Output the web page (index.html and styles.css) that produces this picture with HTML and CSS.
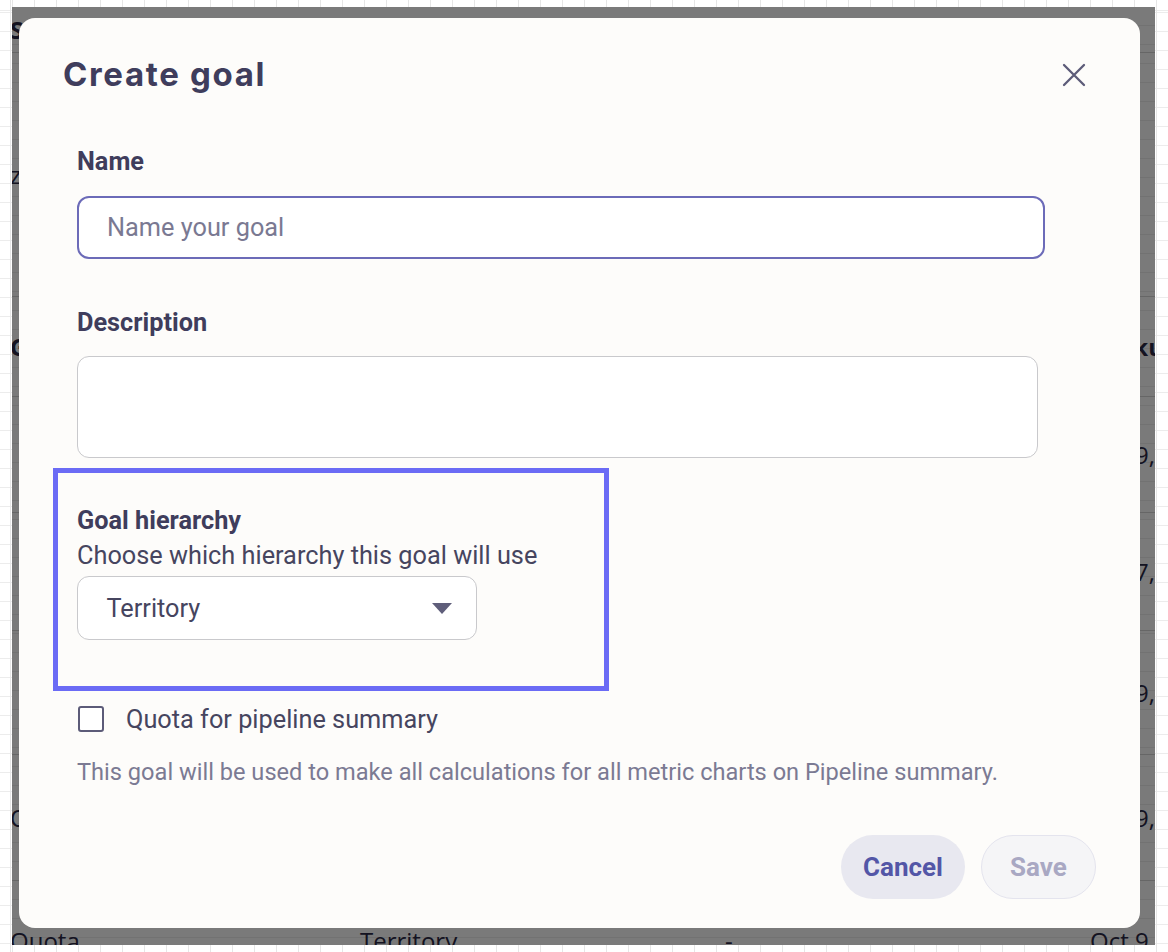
FILE: index.html
```html
<!DOCTYPE html>
<html lang="en">
<head>
<meta charset="utf-8">
<title>Create goal</title>
<link rel="stylesheet" href="styles.css">
</head>
<body>
<div class="frame">
  <div class="sheet">
    <div class="row row-top"><span class="c1 strong">Sales goals</span></div>
    <div class="row row-z"><span class="c1">zone</span></div>
    <div class="row row-head"><span class="c1 strong">Goal type</span><span class="c2 strong">Hierarchy</span><span class="c3 strong">Owner</span><span class="c4 strong">Lookup</span></div>
    <div class="row r1"><span class="c1"></span><span class="c2"></span><span class="c3"></span><span class="c4">Oct 9, 2023</span></div>
    <div class="row r2"><span class="c1"></span><span class="c2"></span><span class="c3"></span><span class="c4">Oct 7, 2023</span></div>
    <div class="row r3"><span class="c1"></span><span class="c2"></span><span class="c3"></span><span class="c4">Oct 9, 2023</span></div>
    <div class="row r4"><span class="c1">Quota</span><span class="c2">Territory</span><span class="c3">-</span><span class="c4">Oct 9, 2023</span></div>
    <div class="row r5"><span class="c1">Quota</span><span class="c2">Territory</span><span class="c3">-</span><span class="c4">Oct 9, 2023</span></div>
  </div>

  <div class="overlay">
    <div class="modal">
      <div class="modal-header">
        <h1 class="title">Create goal</h1>
        <button class="close" aria-label="Close">
          <svg width="24" height="24" viewBox="0 0 24 24"><path d="M2 2 L22 22 M22 2 L2 22" stroke="#5c5b78" stroke-width="2.3" stroke-linecap="round" fill="none"/></svg>
        </button>
      </div>

      <div class="form">
        <div class="field">
          <label class="label">Name</label>
          <div class="input focused"><span class="placeholder">Name your goal</span></div>
        </div>

        <div class="field field-desc">
          <label class="label">Description</label>
          <div class="textarea"></div>
        </div>

        <div class="field field-hier">
          <label class="label">Goal hierarchy</label>
          <div class="helper">Choose which hierarchy this goal will use</div>
          <div class="select">
            <span class="value">Territory</span>
            <svg class="caret" width="20" height="12" viewBox="0 0 20 12"><path d="M0 0 H20 L10 11 Z" fill="#5f5e7a"/></svg>
          </div>
        </div>

        <div class="check-row">
          <span class="checkbox"></span>
          <span class="check-label">Quota for pipeline summary</span>
        </div>
        <div class="hint">This goal will be used to make all calculations for all metric charts on Pipeline summary.</div>

        <div class="actions">
          <button class="btn btn-cancel">Cancel</button>
          <button class="btn btn-save">Save</button>
        </div>
      </div>

      <div class="highlight"></div>
    </div>
  </div>
</div>
</body>
</html>
```
FILE: styles.css
```css
* { box-sizing: border-box; }

html, body {
  margin: 0;
  padding: 0;
}

body {
  width: 1168px;
  height: 952px;
  overflow: hidden;
  padding: 7px 13px 7px 12px;
  background-color: #ffffff;
  background-image:
    repeating-linear-gradient(to right, #e6e6e6 0, #e6e6e6 1px, transparent 1px, transparent 22px),
    repeating-linear-gradient(to bottom, #ececec 0, #ececec 1px, transparent 1px, transparent 19px);
  background-position: 12px 0, 0 12px;
  font-family: Roboto, "Liberation Sans", sans-serif;
}

/* the app area under the dialog */
.frame {
  position: relative;
  width: 1143px;
  height: 938px;
  overflow: hidden;
  background-color: #ffffff;
  background-image:
    repeating-linear-gradient(to bottom, transparent 0, transparent 18px, #eeeeee 18px, #eeeeee 19px);
}

.sheet {
  margin-left: -2px;
  color: #2a2946;
  font-family: "Open Sans", Roboto, sans-serif;
  font-size: 24px;
}

.row {
  display: flex;
  align-items: center;
  height: 118px;
  border-bottom: 1px solid #d6d6d6;
}

.row > span {
  flex-shrink: 0;
  white-space: nowrap;
}

.strong { font-weight: 700; }

.row-top { height: 46px; }
.row-z { height: 244px; }
.row-head { height: 100px; }
.r1 { height: 116px; }
.r2 { height: 118px; }
.r3 { height: 124px; }
.r4 { height: 126px; }
.r5 { height: 120px; }

.row .c1 { width: 350px; }
.row .c2 { width: 365px; }
.row .c3 { width: 365px; }
.row .c4 { width: 200px; }

/* overlay */
.overlay {
  position: absolute;
  inset: 0;
  background: rgba(0, 0, 0, 0.52);
}

.modal {
  position: relative;
  margin: 11px 0 0 7px;
  width: 1121px;
  height: 910px;
  background: #fdfcfa;
  border-radius: 16px;
  padding: 36px 44px 0 44px;
  color: #3f3d5c;
}

.modal-header {
  display: flex;
  justify-content: space-between;
  align-items: flex-start;
}

.title {
  margin: 0;
  font-family: Inter, "Open Sans", sans-serif;
  font-weight: 700;
  font-size: 33px;
  line-height: 40px;
  letter-spacing: 0.05em;
  color: #3f3d5c;
}

.close {
  margin: 9px 10px 0 0;
  padding: 0;
  border: 0;
  background: none;
  width: 24px;
  height: 24px;
  display: flex;
}

.form {
  margin-top: 52px;
  padding-left: 14px;
}

.field {
  display: flex;
  flex-direction: column;
}

.label {
  font-size: 25.3px;
  font-weight: 700;
  line-height: 32px;
  color: #3f3d5c;
}

.input {
  margin-top: 18px;
  width: 968px;
  height: 63px;
  border: 2px solid #6c6bb8;
  border-radius: 12px;
  padding: 0 28px;
  display: flex;
  align-items: center;
  background: #ffffff;
}

.placeholder {
  font-size: 25.3px;
  color: #7a7992;
}

.field-desc { margin-top: 48px; }

.textarea {
  margin-top: 17px;
  width: 961px;
  height: 102px;
  border: 1.5px solid #c9c9cc;
  border-radius: 12px;
  background: #ffffff;
}

.field-hier { margin-top: 47px; }

.helper {
  font-size: 25.3px;
  line-height: 38px;
  color: #46455f;
}

.select {
  margin-top: 1px;
  width: 400px;
  height: 64px;
  border: 1.5px solid #c9c9cc;
  border-radius: 12px;
  background: #ffffff;
  padding: 0 24px 0 28.5px;
  display: flex;
  align-items: center;
  justify-content: space-between;
}

.value {
  font-size: 25.3px;
  color: #46455f;
}

.caret { margin-top: 2px; }

.check-row {
  margin-top: 63px;
  display: flex;
  align-items: center;
  height: 32px;
  gap: 22px;
}

.checkbox {
  width: 26px;
  height: 26px;
  border: 2.5px solid #5c5b78;
  border-radius: 3px;
  margin-left: 1px;
  background: #ffffff;
}

.check-label {
  font-size: 25.3px;
  color: #46455f;
}

.hint {
  margin-top: 22px;
  font-size: 23.6px;
  line-height: 30px;
  color: #7b7a93;
}

.actions {
  margin-top: 48px;
  display: flex;
  justify-content: flex-end;
  gap: 16px;
}

.btn {
  height: 64px;
  border-radius: 32px;
  font-family: Roboto, "Liberation Sans", sans-serif;
  font-size: 26px;
  font-weight: 700;
  padding: 0;
}

.btn-cancel {
  width: 124px;
  background: #e8e8f0;
  border: 0;
  color: #5356a7;
}

.btn-save {
  width: 115px;
  background: #f5f5f7;
  border: 1.5px solid #e4e4ee;
  color: #a9a8c3;
}

/* annotation rectangle over the hierarchy field */
.highlight {
  position: absolute;
  left: 34px;
  top: 450px;
  width: 556px;
  height: 223px;
  border: 5px solid #6b6bf5;
  pointer-events: none;
}
```
